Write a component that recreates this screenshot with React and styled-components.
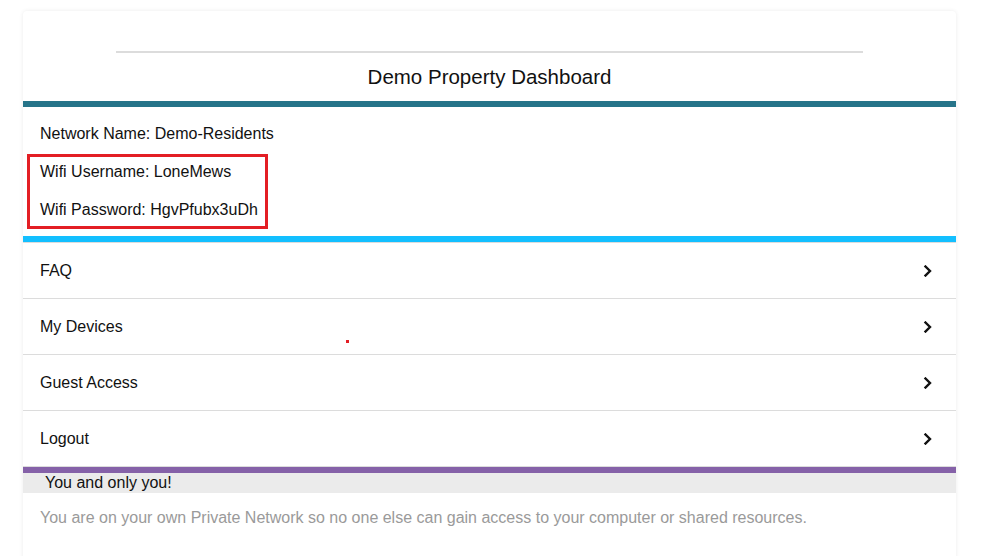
import React from "react";
import styled, { createGlobalStyle } from "styled-components";

const GlobalStyle = createGlobalStyle`
  body {
    margin: 0;
    background: #fff;
    font-family: "Liberation Sans", Arial, sans-serif;
    color: #111;
  }
`;

const menuItems = ["FAQ", "My Devices", "Guest Access", "Logout"];

const Chevron = () => (
  <svg width="10" height="12" viewBox="0 0 10 12">
    <polyline
      points="2.5,1.5 7,6 2.5,10.5"
      fill="none"
      stroke="#111"
      strokeWidth="2.4"
      strokeLinecap="square"
    />
  </svg>
);

const App = () => {
  return (
    <>
      <GlobalStyle />
      <Card>
        <Header>
          <Rule />
          <Title>Demo Property Dashboard</Title>
        </Header>
        <Bar color="#267489" />
        <Info>
          <InfoRow>Network Name: Demo-Residents</InfoRow>
          <Highlight>
            <InfoRow>Wifi Username: LoneMews</InfoRow>
            <InfoRow>Wifi Password: HgvPfubx3uDh</InfoRow>
          </Highlight>
        </Info>
        <Bar color="#13bfff" />
        <Menu>
          {menuItems.map((item) => (
            <MenuRow key={item}>
              <span>{item}</span>
              <Chevron />
            </MenuRow>
          ))}
        </Menu>
        <Bar color="#8561a8" />
        <NoticeTitle>You and only you!</NoticeTitle>
        <NoticeText>
          You are on your own Private Network so no one else can gain access to
          your computer or shared resources.
        </NoticeText>
        <Dot />
      </Card>
    </>
  );
};
export default App;

const Card = styled.div`
  position: relative;
  margin: 11px 0 0 23px;
  width: 933px;
  min-height: 560px;
  background: #fff;
  border-radius: 4px;
  box-shadow: 0 0 4px rgba(0, 0, 0, 0.08);
  overflow: hidden;
`;

const Header = styled.div`
  display: flex;
  flex-direction: column;
  align-items: center;
  padding-top: 40px;
  height: 50px;
`;

const Rule = styled.div`
  width: 80%;
  height: 2px;
  background: #dcdcdc;
`;

const Title = styled.h1`
  margin: 12px 0 0;
  font-size: 20.5px;
  font-weight: normal;
  line-height: 24px;
`;

const Bar = styled.div`
  height: 6px;
  background: ${(p) => p.color};
`;

const Info = styled.div`
  display: flex;
  flex-direction: column;
  padding: 18px 0 7px 17px;
`;

const InfoRow = styled.div`
  font-size: 16px;
  line-height: 18px;
`;

const Highlight = styled.div`
  display: flex;
  flex-direction: column;
  gap: 20px;
  width: 225px;
  margin: 11px 0 0 -13px;
  padding: 6px 0 7px 10px;
  border: 3px solid #e31e24;
`;

const Menu = styled.div`
  border-top: 1px solid #dcdcdc;
`;

const MenuRow = styled.div`
  display: flex;
  align-items: center;
  justify-content: space-between;
  height: 55px;
  padding: 0 23px 0 17px;
  font-size: 16px;
  border-bottom: 1px solid #dcdcdc;
`;

const NoticeTitle = styled.div`
  background: #ebebeb;
  padding: 0 22px;
  height: 20px;
  font-size: 16px;
  line-height: 20px;
`;

const NoticeText = styled.p`
  margin: 16px 0 0;
  padding: 0 17px;
  font-size: 16px;
  line-height: 18px;
  color: #9a9a9a;
`;

const Dot = styled.span`
  position: absolute;
  left: 323px;
  top: 329px;
  width: 3px;
  height: 3px;
  background: #e31e24;
`;
